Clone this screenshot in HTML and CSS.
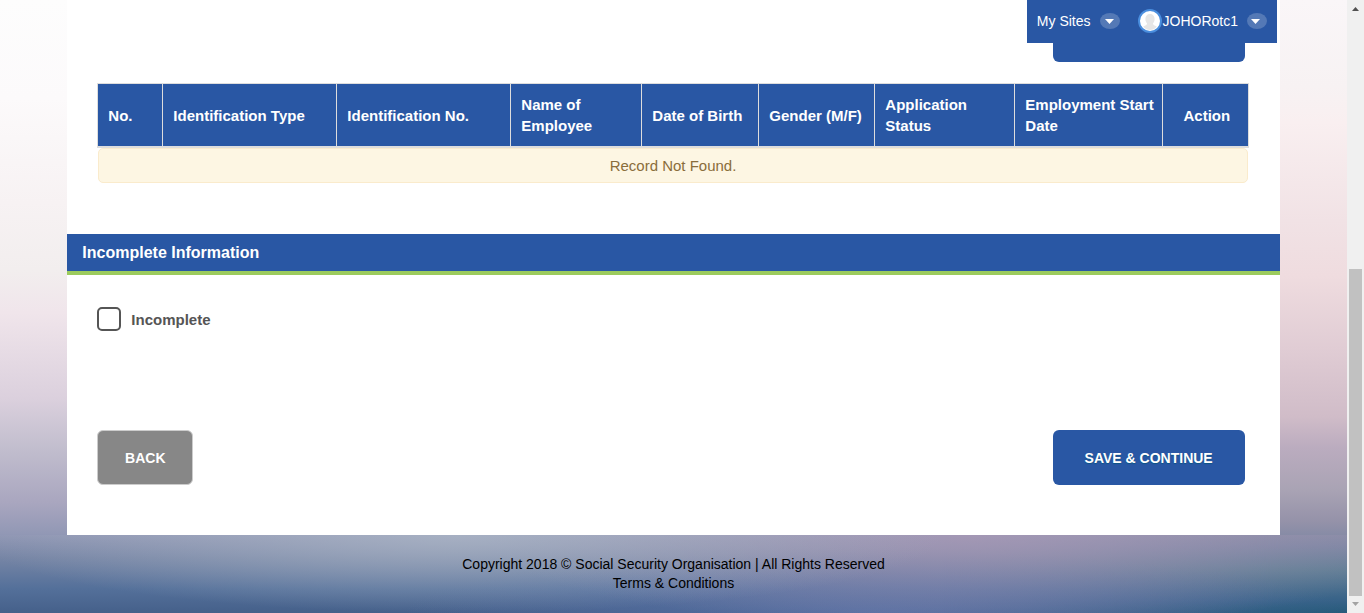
FILE: index.html
```html
<!DOCTYPE html>
<html lang="en">
<head>
<meta charset="utf-8">
<title>Social Security Organisation</title>
<link rel="stylesheet" href="styles.css">
</head>
<body>
<div class="page">
  <header class="topbar">
    <button class="topbar-item" type="button">My Sites
      <span class="caret"><svg viewBox="0 0 20 16" width="20" height="16" aria-hidden="true"><path d="M5 6h9l-4.500 5z" fill="#fff"/></svg></span>
    </button>
    <button class="topbar-item user" type="button">
      <svg class="avatar" viewBox="0 0 24 24" width="24" height="24" aria-hidden="true">
        <circle cx="12" cy="12" r="11" fill="#fff" stroke="#4a8ede" stroke-width="2"/>
        <path d="M12 5c3 0 4.600 2 4.600 5 0 2-.6 3.400-1.700 4.500.3 1.500 1.400 2 4 3C17.200 20 14.500 21 12 21s-5.200-1-6.900-3.500c2.600-1 3.700-1.500 4-3C8 13.400 7.400 12 7.400 10c0-3 1.600-5 4.600-5z" fill="#e6e6e6"/>
      </svg>JOHORotc1
      <span class="caret"><svg viewBox="0 0 20 16" width="20" height="16" aria-hidden="true"><path d="M4 6h9l-4.500 5z" fill="#fff"/></svg></span>
    </button>
  </header>
  <main class="card">
    <div class="toolbar"><button class="btn-add" type="button" aria-label="Add employee"></button></div>
    <section class="records">
      <table class="grid">
        <colgroup>
          <col class="c-no"><col class="c-id"><col class="c-id"><col class="c-name"><col class="c-dob"><col class="c-gender"><col class="c-status"><col class="c-start"><col class="c-action">
        </colgroup>
        <thead>
          <tr><th>No.</th><th>Identification Type</th><th>Identification No.</th><th>Name of Employee</th><th>Date of Birth</th><th>Gender (M/F)</th><th>Application Status</th><th>Employment Start Date</th><th class="center">Action</th></tr>
        </thead>
      </table>
      <p class="empty">Record Not Found.</p>
    </section>
    <h2 class="section-title">Incomplete Information</h2>
    <label class="check"><input type="checkbox"><span>Incomplete</span></label>
    <div class="actions">
      <button class="btn btn-back" type="button">BACK</button>
      <button class="btn btn-save" type="submit">SAVE &amp; CONTINUE</button>
    </div>
  </main>
  <footer class="footer">
    <p>Copyright 2018 © Social Security Organisation | All Rights Reserved</p>
    <p><a href="#">Terms &amp; Conditions</a></p>
  </footer>
</div>
<div class="scrollbar" aria-hidden="true">
  <svg viewBox="0 0 17 17" width="17" height="17"><path d="M5 11h7L8.500 7z" fill="#505050"/></svg>
  <div class="track"><div class="thumb"></div></div>
  <svg viewBox="0 0 17 17" width="17" height="17"><path d="M5 6h7l-3.500 4z" fill="#a3a3a3"/></svg>
</div>
</body>
</html>
```
FILE: styles.css
```css
* { box-sizing: border-box; }
body {
  margin: 0;
  display: flex;
  min-height: 100vh;
  font-family: "Liberation Sans", Arial, sans-serif;
  font-size: 15px;
  color: #555;
}
p, h2 { margin: 0; }
button { font-family: inherit; border: 0; cursor: pointer; }

.page {
  flex: 1;
  position: relative;
  isolation: isolate;
  display: flex;
  flex-direction: column;
  background: linear-gradient(#fdfdfd 0%, #fcfafb 16%, #f7f2f3 33%, #f2eeee 44%, #f0e5eb 51%, #dbd0dd 65%, #c2bece 73%, #a9a6bf 82%, #9298b5 87%, #7685a5 91%, #54709a 96%, #45608a 100%);
}
.page::before {
  content: "";
  position: absolute;
  inset: 0;
  z-index: -1;
  background: linear-gradient(#faf6f8 0%, #f7f2f3 14%, #f9eff0 20%, #f1e2e5 36%, #efdcdf 45%, #e0ccd4 57%, #d0bcc8 68%, #bbacbf 73%, #a9a3b4 80%, #9592a9 85%, #7c86a3 89%, #5e7d94 93%, #376288 98%, #265a7a 100%);
  mask-image: linear-gradient(to right, transparent 70%, #000 95%);
}

.topbar {
  position: absolute;
  top: 0;
  right: 70px;
  z-index: 2;
  display: flex;
  gap: 18px;
  padding: 8px 10px 10px;
  background: #2957a4;
}
.topbar-item {
  display: flex;
  align-items: center;
  height: 25px;
  padding: 0;
  background: none;
  color: #fff;
  font-size: 14px;
}
.caret {
  margin-left: 9px;
  height: 16px;
  border-radius: 50%;
  background: #5479b6;
}
.caret svg, .avatar { display: block; }
.avatar { margin-right: 1px; }

.card { margin: 0 5%; background: #fff; }
.toolbar { display: flex; justify-content: flex-end; padding-right: 35px; }
.btn-add {
  width: 192px;
  height: 62px;
  border-radius: 0 0 6px 6px;
  background: #2957a4;
}
.records { padding: 21px 31px 0 30px; }
.grid {
  width: 100%;
  table-layout: fixed;
  border-collapse: collapse;
}
.c-no { width: 65px; }
.c-id { width: 174px; }
.c-name { width: 131px; }
.c-dob { width: 117px; }
.c-gender { width: 116px; }
.c-status { width: 140px; }
.c-start { width: 148px; }
.c-action { width: 86px; }
.grid th {
  padding: 10px 8px 10px 10px;
  border: 1px solid #ddd;
  border-bottom-width: 2px;
  background: #2957a4;
  color: #fff;
  font-size: 15px;
  line-height: 21px;
  text-align: left;
}
.grid th.center { text-align: center; }
.empty {
  margin: 0 1px;
  padding: 6px;
  border: 1px solid #faebcc;
  border-radius: 5px;
  background: #fdf6e3;
  color: #8a6d3b;
  font-size: 15px;
  line-height: 21px;
  text-align: center;
}
.section-title {
  margin-top: 51px;
  padding: 8px 15px;
  border-bottom: 4px solid #9ccb5d;
  background: #2957a4;
  color: #fff;
  font-size: 16px;
  line-height: 21px;
}
.check {
  display: flex;
  align-items: center;
  gap: 10px;
  width: max-content;
  margin: 32px 30px 0;
  font-size: 15px;
  font-weight: bold;
}
.check input {
  appearance: none;
  width: 24px;
  height: 24px;
  margin: 0;
  border: 2px solid #555;
  border-radius: 5px;
  background: #fff;
}
.check input:checked { background: #555; }
.actions {
  display: flex;
  justify-content: space-between;
  margin-top: 99px;
  padding: 0 35px 50px 30px;
}
.btn {
  height: 55px;
  border-radius: 6px;
  color: #fff;
  font-size: 14px;
  font-weight: bold;
}
.btn-back { width: 96px; border: 1px solid #ccc; background: #878787; }
.btn-save { width: 192px; background: #2957a4; text-shadow: 0 1px 1px #0d5585; }

.footer {
  flex: 1;
  padding: 20px 0;
  background:
    radial-gradient(ellipse 36% 100% at 34% 0, rgba(172, 182, 198, .8), transparent),
    radial-gradient(ellipse 36% 120% at 72% 0, rgba(168, 152, 181, .8), transparent),
    radial-gradient(ellipse 35% 80% at 65% 100%, rgba(92, 116, 172, .7), transparent);
  color: #000;
  font-size: 14px;
  line-height: 19px;
  text-align: center;
}
.footer a { color: inherit; text-decoration: none; }

.scrollbar {
  display: flex;
  flex-direction: column;
  width: 17px;
  background: #f0f0f0;
}
.track { flex: 1; display: flex; align-items: flex-end; padding: 0 2px; }
.thumb { width: 100%; height: 56.500%; background: #c1c1c1; }
```
